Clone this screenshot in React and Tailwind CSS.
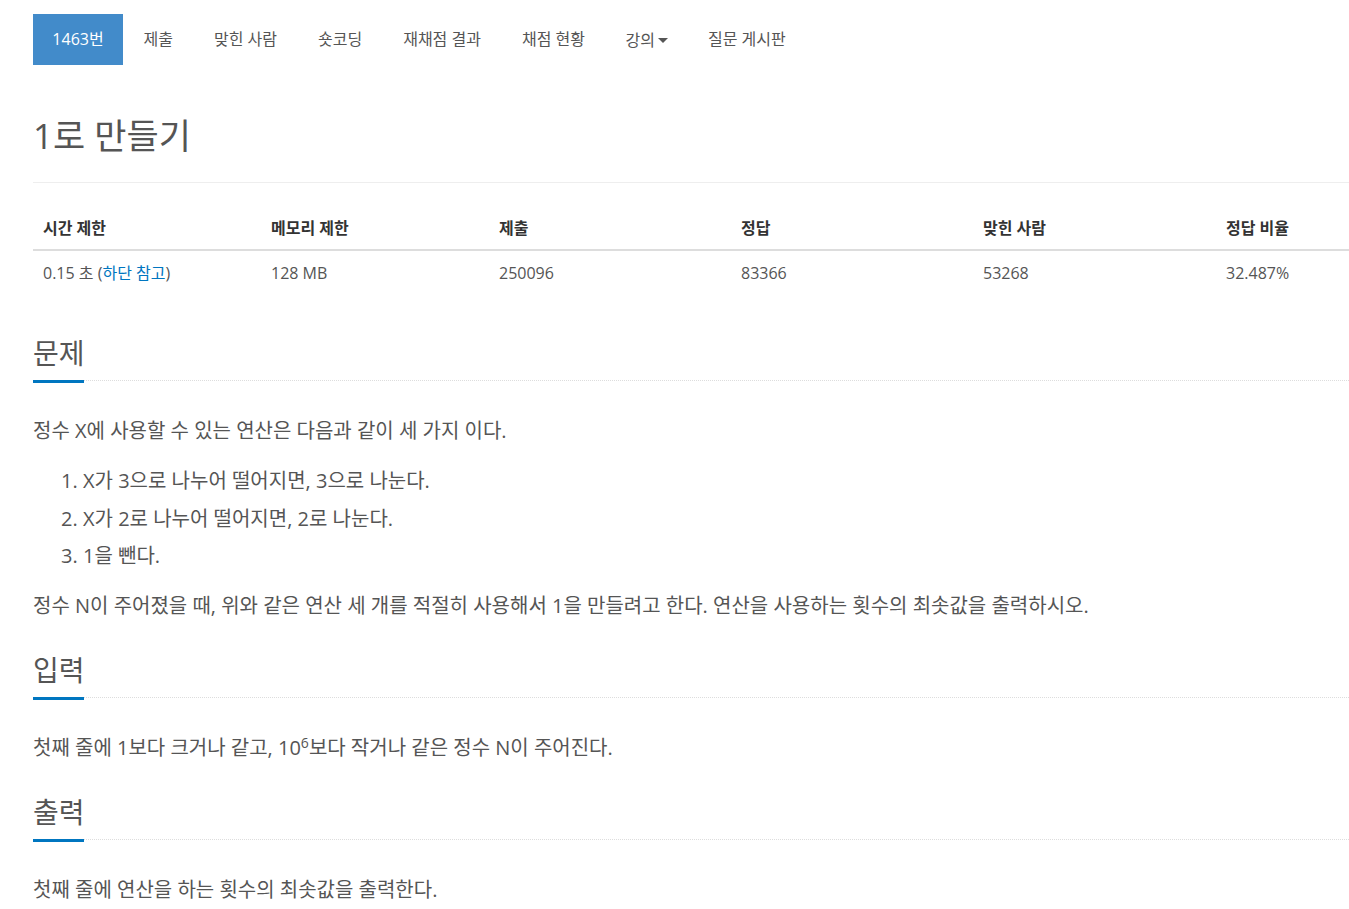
import React from "react";

const font = { fontFamily: '"Open Sans", "Noto Sans CJK KR", sans-serif' };

function Heading({ children }) {
  return (
    <div>
      <div className="h-[36px] text-[28px] leading-[36px] text-[#555]">{children}</div>
      <div className="mt-[9px] flex items-start">
        <div className="h-[3px] w-[51px] bg-[#0076c0]" />
        <div className="flex-1 border-t border-dotted border-[#ddd]" />
      </div>
    </div>
  );
}

export default function App() {
  const navItems = ["제출", "맞힌 사람", "숏코딩", "재채점 결과", "채점 현황"];
  const heads = ["시간 제한", "메모리 제한", "제출", "정답", "맞힌 사람", "정답 비율"];
  return (
    <div className="min-h-screen bg-white pl-[33px] text-[#555]" style={font}>
      <div className="flex pt-[14px] text-[16px]">
        <div className="h-[51px] w-[90px] bg-[#428bca] text-center leading-[51px] text-white">1463번</div>
        {navItems.map((t) => (
          <div key={t} className="h-[51px] px-[20.5px] leading-[51px] text-[#555]">{t}</div>
        ))}
        <div className="flex h-[51px] items-center px-5 text-[#555]">
          강의
          <span className="ml-[3px] mt-[2px] h-0 w-0 border-x-[5px] border-t-[5px] border-x-transparent border-t-[#555]" />
        </div>
        <div className="h-[51px] px-5 leading-[51px] text-[#555]">질문 게시판</div>
      </div>

      <div className="mt-[47px] h-[48px] text-[35px] leading-[48px] text-[#555]">1로 만들기</div>
      <div className="mt-[22px] border-t border-[#eee]" />

      <div className="mt-[24px]">
        <div className="grid grid-cols-[228px_228px_242px_242px_243px_1fr] border-b-2 border-[#ddd] text-[16px] font-bold text-[#333]">
          {heads.map((h) => (
            <div key={h} className="h-[42px] pl-[10px] leading-[42px]">{h}</div>
          ))}
        </div>
        <div className="grid grid-cols-[228px_228px_242px_242px_243px_1fr] text-[16px] text-[#555]">
          <div className="h-[44px] pl-[10px] leading-[44px]">
            0.15 초 (<span className="text-[#0076c0]">하단 참고</span>)
          </div>
          <div className="h-[44px] pl-[10px] leading-[44px]">128 MB</div>
          <div className="h-[44px] pl-[10px] leading-[44px]">250096</div>
          <div className="h-[44px] pl-[10px] leading-[44px]">83366</div>
          <div className="h-[44px] pl-[10px] leading-[44px]">53268</div>
          <div className="h-[44px] pl-[10px] leading-[44px]">32.487%</div>
        </div>
      </div>

      <div className="mt-[40px]">
        <Heading>문제</Heading>
        <div className="mt-[34px] text-[20px] leading-[28px]">
          <p>정수 X에 사용할 수 있는 연산은 다음과 같이 세 가지 이다.</p>
          <ol className="mt-[22px] list-decimal pl-[50px]">
            <li className="h-[28px]">X가 3으로 나누어 떨어지면, 3으로 나눈다.</li>
            <li className="mt-[10px] h-[28px]">X가 2로 나누어 떨어지면, 2로 나눈다.</li>
            <li className="mt-[9px] h-[28px]">1을 뺀다.</li>
          </ol>
          <p className="mt-[22px]">
            정수 N이 주어졌을 때, 위와 같은 연산 세 개를 적절히 사용해서 1을 만들려고 한다. 연산을 사용하는 횟수의 최솟값을 출력하시오.
          </p>
        </div>
      </div>

      <div className="mt-[32px]">
        <Heading>입력</Heading>
        <p className="mt-[34px] text-[20px] leading-[28px]">
          첫째 줄에 1보다 크거나 같고, 10<sup className="text-[14px]">6</sup>보다 작거나 같은 정수 N이 주어진다.
        </p>
      </div>

      <div className="mt-[32px] pb-[20px]">
        <Heading>출력</Heading>
        <p className="mt-[34px] text-[20px] leading-[28px]">첫째 줄에 연산을 하는 횟수의 최솟값을 출력한다.</p>
      </div>
    </div>
  );
}
